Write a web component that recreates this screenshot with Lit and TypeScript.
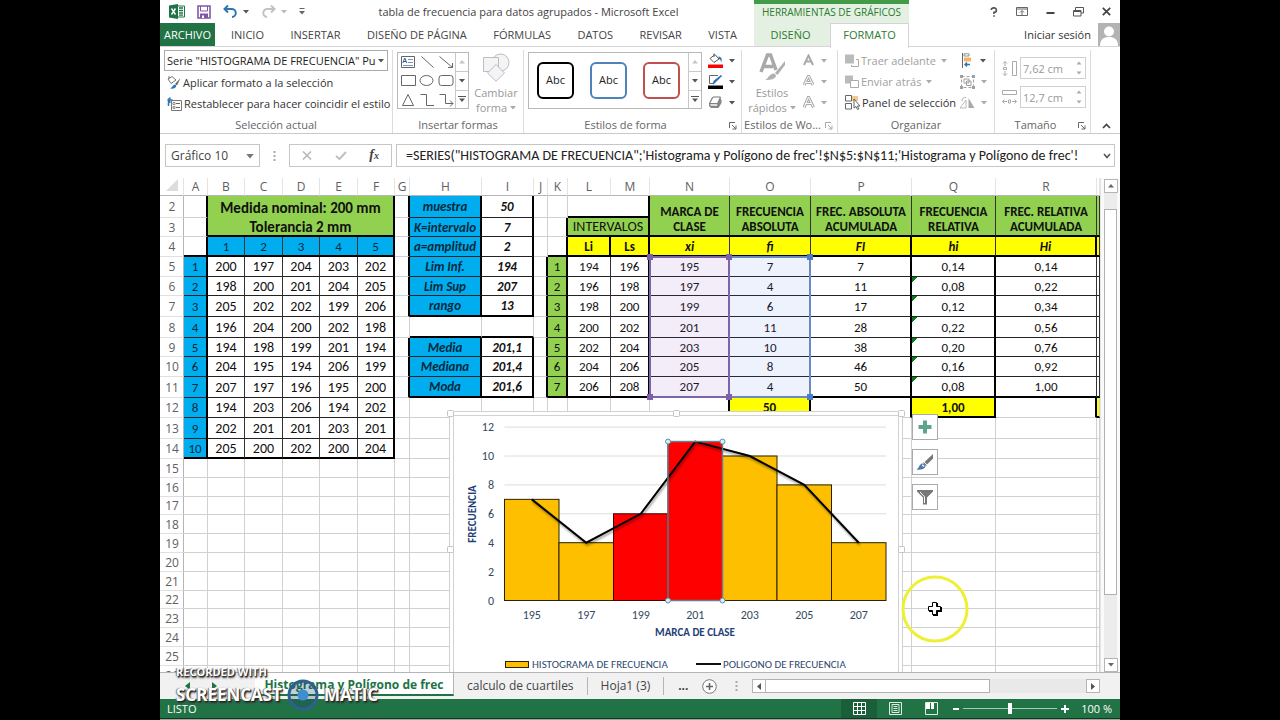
import { LitElement, html, svg, css, nothing } from "lit";
import { customElement } from "lit/decorators.js";
import { classMap } from "lit/directives/class-map.js";
import { styleMap } from "lit/directives/style-map.js";

const COLS = "ABCDEFGHIJKLMNOPQRS".split("");
const COL_WIDTHS = [24, 37, 38, 37, 38, 37, 15, 72, 52, 14, 20, 43, 39, 80, 81, 101, 84, 101, 3];
const ROW_HEAD = 24;
const COL_HEAD = 18;
const FIRST_ROW = 2;
const ROW_HEIGHTS = [22, 19, 20, 20, 19, 21, 21, 19, 20, 21, 20, 21, 20, 19, 19, 18, 19, 19, 19, 19, 18, 19, 19, 19, 19];

const colX = (col: string) => ROW_HEAD + COL_WIDTHS.slice(0, COLS.indexOf(col)).reduce((a, b) => a + b, 0);
const rowY = (row: number) => COL_HEAD + ROW_HEIGHTS.slice(0, row - FIRST_ROW).reduce((a, b) => a + b, 0);

const cells: Record<string, string> = {};
const put = (col: string, row: number, values: (string | number)[]) => {
  const start = COLS.indexOf(col);
  values.forEach((v, i) => (cells[COLS[start + i] + row] = String(v)));
};

cells.B2 = "Medida nominal: 200 mm";
cells.B3 = "Tolerancia 2 mm";
put("B", 4, [1, 2, 3, 4, 5]);
[
  [200, 197, 204, 203, 202],
  [198, 200, 201, 204, 205],
  [205, 202, 202, 199, 206],
  [196, 204, 200, 202, 198],
  [194, 198, 199, 201, 194],
  [204, 195, 194, 206, 199],
  [207, 197, 196, 195, 200],
  [194, 203, 206, 194, 202],
  [202, 201, 201, 203, 201],
  [205, 200, 202, 200, 204],
].forEach((r, i) => put("A", 5 + i, [i + 1, ...r]));
put("H", 2, ["muestra", 50]);
put("H", 3, ["K=intervalo", 7]);
put("H", 4, ["a=amplitud", 2]);
put("H", 5, ["Lim Inf.", 194]);
put("H", 6, ["Lim Sup", 207]);
put("H", 7, ["rango", 13]);
put("H", 9, ["Media", "201,1"]);
put("H", 10, ["Mediana", "201,4"]);
put("H", 11, ["Moda", "201,6"]);
cells.L3 = "INTERVALOS";
put("N", 2, ["MARCA DE CLASE", "FRECUENCIA ABSOLUTA", "FREC. ABSOLUTA ACUMULADA", "FRECUENCIA RELATIVA", "FREC. RELATIVA ACUMULADA"]);
put("L", 4, ["Li", "Ls", "xi", "fi", "FI", "hi", "Hi"]);
[
  [194, 196, 195, 7, 7, "0,14", "0,14"],
  [196, 198, 197, 4, 11, "0,08", "0,22"],
  [198, 200, 199, 6, 17, "0,12", "0,34"],
  [200, 202, 201, 11, 28, "0,22", "0,56"],
  [202, 204, 203, 10, 38, "0,20", "0,76"],
  [204, 206, 205, 8, 46, "0,16", "0,92"],
  [206, 208, 207, 4, 50, "0,08", "1,00"],
].forEach((r, i) => put("K", 5 + i, [i + 1, ...r]));
cells.O12 = "50";
cells.Q12 = "1,00";

const SPANS: Record<string, [number, number]> = {
  B2: [5, 1], B3: [5, 1], L2: [2, 1], L3: [2, 1],
  N2: [1, 2], O2: [1, 2], P2: [1, 2], Q2: [1, 2], R2: [1, 2], S2: [1, 2],
};
const covered = new Set<string>();
for (const [key, [cs, rs]] of Object.entries(SPANS)) {
  const c = COLS.indexOf(key[0]);
  const r = Number(key.slice(1));
  for (let i = 0; i < cs; i++) for (let j = 0; j < rs; j++) if (i || j) covered.add(COLS[c + i] + (r + j));
}

/** Fill, border and type classes of one cell. */
function look(c: string, r: number): Record<string, boolean> {
  const has = (s: string) => s.includes(c);
  const between = (a: number, b: number) => r >= a && r <= b;
  const k: Record<string, boolean> = {};
  const stats = between(2, 7) || between(9, 11);
  const body = between(5, 11);

  if (has("A") && between(5, 14)) k.blue = k.rm = k.bt = true;
  if (has("A") && r < 5) k.rm = true;
  if (has("BCDEF")) {
    if (r < 4) k.green = k.rm = k.title = true;
    else if (r <= 14) k.rt = k.bt = true;
    if (r === 2) k.bn = true;
    if (r === 4) k.blue = true;
    if (between(5, 14)) k.big = true;
    if (has("F") && r <= 14) k.rm = true;
  }
  if (has("ABCDEF") && (r === 4 || r === 14)) k.bm = true;
  if (has("BCDEF") && r === 3) k.bm = true;

  if (has("G") && stats) k.rm = true;
  if (has("HI") && stats) {
    k.bt = k.rm = k.bi = true;
    if (has("H")) k.blue = true;
  }
  if (has("HI") && (r === 7 || r === 8 || r === 11)) k.bm = true;

  if (has("J") && body) k.rm = true;
  if (has("K")) {
    if (r === 3 || r === 4) k.rm = true;
    if (body) k.green = k.rm = k.bt = true;
  }
  if (has("LM")) {
    if (r === 2) k.rm = k.bm = true;
    if (r === 3) k.green = k.rm = k.bm = k.big = true;
    if (r === 4) k.yellow = k.rm = k.bold = true;
    if (body) k.rt = k.bt = true;
    if (has("M") && body) k.rm = true;
  }
  if (has("NOPQRS")) {
    if (r < 4) k.green = k.rt = k.bm = k.head = true;
    if (r === 4) {
      k.yellow = k.rt = k.bi = true;
      if (has("PR")) k.rm = true;
    }
    if (body) k.rt = k.bt = true;
    if (has("PQ") && body) k.rm = true;
  }
  if (has("KLMNOPQRS") && (r === 4 || r === 11)) k.bm = true;
  if (r === 12) {
    if (has("NOPQR")) k.rm = true;
    if (has("OQS")) k.yellow = k.bm = k.bold = true;
  }
  if (has("Q") && between(6, 11)) k.flag = true;
  return k;
}

@customElement("frequency-chart")
export class FrequencyChart extends LitElement {
  static styles = css`
    :host { display: block; }
    svg { display: block; overflow: visible; font-family: Carlito, Lato, sans-serif; }
    .frame { fill: #fff; stroke: #d2d2d2; }
    .handle { fill: #fff; stroke: #c4c4c4; }
    .gridline { stroke: #dcdcdc; }
    .tick { font-size: 12px; fill: #34495e; }
    .axis { font-size: 11px; font-weight: 700; fill: #1f3f77; }
    .legend { font-size: 11px; fill: #2f4a70; }
    .bar { fill: #fdbf00; stroke: #2b2200; }
    .hot { fill: #fe0000; stroke: #400; }
    .poly { fill: none; stroke: #000; stroke-width: 2; filter: drop-shadow(1px 2px 1px rgba(0, 0, 0, 0.4)); }
    .sel { fill: none; stroke: #6a7f8c; stroke-width: 1.5; }
    .dot { fill: #d9ecf5; stroke: #5f8fa5; }
  `;

  private data = [
    { x: 195, f: 7 }, { x: 197, f: 4 }, { x: 199, f: 6, hot: true }, { x: 201, f: 11, hot: true },
    { x: 203, f: 10 }, { x: 205, f: 8 }, { x: 207, f: 4 },
  ];

  render() {
    const left = 55.5, base = 189.5, step = 54.5, unit = 14.45;
    const y = (f: number) => base - f * unit;
    const mid = (i: number) => left + step * (i + 0.5);
    const handles = [[1, 2], [227, 2], [452, 2], [1, 138], [452, 138]];
    return html`<svg width="454" height="266" role="img" aria-label="Histograma y polígono de frecuencia">
      <rect class="frame" x="0.5" y="0.5" width="453" height="290"></rect>
      <rect class="frame" x="4.5" y="4.5" width="445" height="290"></rect>
      ${handles.map(([hx, hy]) => svg`<rect class="handle" x=${hx - 2.5} y=${hy - 2.5} width="6" height="6" rx="1"></rect>`)}
      ${[0, 2, 4, 6, 8, 10, 12].map((v) => svg`
        <line class="gridline" x1=${left} x2=${left + step * 7} y1=${y(v)} y2=${y(v)}></line>
        <text class="tick" x="45" y=${y(v) + 4} text-anchor="end">${v}</text>`)}
      ${this.data.map((d, i) => svg`
        <rect class="bar ${d.hot ? "hot" : ""}" x=${left + step * i} y=${y(d.f)} width=${step} height=${d.f * unit}></rect>
        <text class="tick" x=${mid(i)} y="208" text-anchor="middle">${d.x}</text>`)}
      <polyline class="poly" points=${this.data.map((d, i) => `${mid(i)},${y(d.f)}`).join(" ")}></polyline>
      <rect class="sel" x=${left + step * 3} y=${y(11)} width=${step} height=${11 * unit}></rect>
      ${[3, 4].map((i) => [0, 11].map((v) => svg`<circle class="dot" cx=${left + step * i} cy=${y(v)} r="2.5"></circle>`))}
      <text class="axis" x="246" y="225" text-anchor="middle">MARCA DE CLASE</text>
      <text class="axis" transform="translate(27 103) rotate(-90)" text-anchor="middle">FRECUENCIA</text>
      <rect class="bar" x="56.5" y="250.5" width="23" height="6"></rect>
      <text class="legend" x="83" y="257">HISTOGRAMA DE FRECUENCIA</text>
      <line x1="247" x2="272" y1="253" y2="253" stroke="#111" stroke-width="2"></line>
      <text class="legend" x="274" y="257">POLIGONO DE FRECUENCIA</text>
    </svg>`;
  }
}

@customElement("sheet-grid")
export class SheetGrid extends LitElement {
  static styles = css`
    :host { display: block; position: relative; overflow: hidden; height: 100%; }
    table {
      border-collapse: separate; border-spacing: 0; table-layout: fixed; width: 940px;
      font: 13px/16px Carlito, Lato, sans-serif; color: #111;
    }
    th, td {
      box-sizing: border-box; padding: 1px 0 0; text-align: center; vertical-align: middle; white-space: nowrap;
      border: 0 solid #d0d0d0; border-right-width: 1px; border-bottom-width: 1px; background: #fff;
    }
    th { font: 12px/14px "Open Sans", sans-serif; color: #606060; }
    thead th { border-right-color: #e4e4e4; border-bottom-color: #b5b5b5; padding: 0; }
    tbody th { border-right-color: #b5b5b5; border-bottom-color: #e0e0e0; padding-left: 1px; }
    .blue { background: #00aeef; color: #06283b; }
    .green { background: #92d050; }
    .yellow { background: #ffff00; }
    .rt { border-right-color: #333; }
    .bt { border-bottom-color: #222; }
    .rm { border-right: 2px solid #000; }
    .bm { border-bottom: 2px solid #000; }
    .bn { border-bottom: 0; }
    .big { font-size: 14px; }
    .bold, .bi, .title, .head { font-weight: 700; }
    .bi { font-style: italic; }
    .title { font-size: 15px; }
    .head { font-size: 13px; line-height: 15px; white-space: normal; padding: 7px 2px 0; }
    .flag { background: linear-gradient(135deg, #0a7a1c 4px, #fff 4px); }
    .range { position: absolute; box-sizing: border-box; border: 2px solid; }
    .purple { background: rgba(150, 90, 200, 0.11); border-color: #7a66a8; color: #7f60aa; }
    .azure { background: rgba(90, 130, 240, 0.1); border-color: #6d89c4; color: #4d7cc9; border-left-width: 0; }
    .knob { position: absolute; width: 6px; height: 6px; background: currentColor; }
    .tl { left: -4px; top: -4px; }
    .tr { right: -4px; top: -4px; }
    .bl { left: -4px; bottom: -4px; }
    .br { right: -4px; bottom: -4px; }
    frequency-chart { position: absolute; left: 289px; top: 233px; }
    .tools { position: absolute; left: 752px; top: 236px; display: grid; gap: 9px; }
    .tools button {
      width: 26px; height: 26px; padding: 0; display: grid; place-items: center;
      background: #fff; border: 1px solid #ababab;
    }
  `;

  private range(col: string, tone: string) {
    const x = colX(col), w = COL_WIDTHS[COLS.indexOf(col)];
    const box = { left: `${x - 1}px`, top: `${rowY(5) - 1}px`, width: `${w + 1}px`, height: `${rowY(12) - rowY(5) + 1}px` };
    return html`<div class="range ${tone}" style=${styleMap(box)}>
      ${(tone === "purple" ? ["tl", "tr", "bl", "br"] : ["tr", "br"]).map((p) => html`<span class="knob ${p}"></span>`)}
    </div>`;
  }

  render() {
    return html`
      <table>
        <colgroup>
          <col style=${styleMap({ width: `${ROW_HEAD}px` })} />
          ${COL_WIDTHS.map((w) => html`<col style=${styleMap({ width: `${w}px` })} />`)}
        </colgroup>
        <thead>
          <tr style=${styleMap({ height: `${COL_HEAD}px` })}>
            <th><svg width="12" height="12" viewBox="0 0 12 12" aria-hidden="true"><path d="M12 0V12H0Z" fill="#dcdcdc"/></svg></th>
            ${COLS.map((c) => html`<th scope="col">${c === "S" ? nothing : c}</th>`)}
          </tr>
        </thead>
        <tbody>
          ${ROW_HEIGHTS.map((h, i) => {
            const r = i + FIRST_ROW;
            return html`<tr style=${styleMap({ height: `${h}px` })}>
              <th scope="row">${r}</th>
              ${COLS.filter((c) => !covered.has(c + r)).map((c) => {
                const [cs, rs] = SPANS[c + r] ?? [1, 1];
                return html`<td class=${classMap(look(c, r))} colspan=${cs} rowspan=${rs}>${cells[c + r] ?? nothing}</td>`;
              })}
            </tr>`;
          })}
        </tbody>
      </table>
      ${this.range("O", "azure")}
      ${this.range("N", "purple")}
      <frequency-chart></frequency-chart>
      <div class="tools">
        <button aria-label="Elementos de gráfico"><svg width="14" height="14" viewBox="0 0 14 14"><path d="M5 0.500H9V5H13.500V9H9V13.500H5V9H0.500V5H5Z" fill="#5fa58c"/></svg></button>
        <button aria-label="Estilos de gráfico"><svg width="18" height="18" viewBox="0 0 18 18"><path d="M17 1V5.500L11 11.500 8.500 9Z" fill="#777"/><path d="M7.500 9.500 10.500 12.500" stroke="#777" stroke-width="1"/><path d="M0.500 16.500C3 15.500 3 11.500 6 10.500 9 10 10.500 12.500 9 14.500 7 16.500 4 17 0.500 16.500Z" fill="#4e78a8"/><path d="M6.200 11.800 8 13.500" stroke="#fff" stroke-width="1.400"/></svg></button>
        <button aria-label="Filtros de gráfico"><svg width="18" height="18" viewBox="0 0 18 18"><path d="M1 2H17V3.500L11 9.500V16.500H7V9.500L1 3.500Z" fill="#777"/><path d="M4 4 8.500 8.800V15" stroke="#fff" fill="none"/></svg></button>
      </div>
    `;
  }
}

const down = (fill = "#555") => svg`<path d="M0 0H6L3 3.500Z" fill=${fill}></path>`;
const caret = (fill = "#555") => html`<svg class="caret" width="6" height="4" viewBox="0 0 6 4" aria-hidden="true">${down(fill)}</svg>`;
const launcher = (color = "#666") => html`<button class="launch" aria-label="Más opciones"><svg width="8" height="8" viewBox="0 0 8 8"><path d="M0.500 6V0.500H6M3 3 7 7M7 3.500V7H3.500" fill="none" stroke=${color}></path></svg></button>`;
const spinner = html`<svg class="spin" width="6" height="14" viewBox="0 0 6 14" aria-hidden="true"><path d="M0.500 3.500H5.500L3 0.500ZM0.500 10.500H5.500L3 13.500Z" fill="#aaa"/></svg>`;
const galleryArrows = html`<div class="arrows">
  <button aria-label="Anterior"><svg width="6" height="4"><path d="M0 3.500H6L3 0Z" fill="#c4c4c4"/></svg></button>
  <button aria-label="Siguiente">${caret()}</button>
  <button aria-label="Más"><svg width="8" height="6"><path d="M0 0.500H8" stroke="#555"/><path d="M1 2.500H7L4 6Z" fill="#555"/></svg></button>
</div>`;

@customElement("app-root")
export class AppRoot extends LitElement {
  static styles = css`
    :host {
      display: flex; justify-content: center; height: 100vh; background: #000; overflow: hidden;
      font: 12px/16px "Open Sans", "Noto Sans", sans-serif; color: #444;
    }
    * { box-sizing: border-box; }
    button, input, select { font: inherit; color: inherit; margin: 0; border-radius: 0; }
    button { background: none; border: 0; padding: 0; }
    svg { display: block; flex: none; }
    .window {
      position: relative; height: 100%; aspect-ratio: 4 / 3; max-width: 100%; background: #fff;
      display: flex; flex-direction: column; overflow: hidden; white-space: nowrap;
    }

    .top { display: flex; height: 47px; flex: none; border-bottom: 1px solid #d4d4d4; }
    .main { width: 594px; display: flex; flex-direction: column; }
    .titlebar { display: flex; align-items: center; height: 23px; padding-left: 9px; }
    .quick { display: flex; align-items: center; gap: 12px; width: 144px; }
    .quick .pair { display: flex; align-items: center; gap: 5px; }
    .title { flex: 1; text-align: center; padding: 0 10px 0 0; font-size: 11px; }
    .tabs { flex: 1; display: flex; font-size: 11px; }
    .file { width: 55px; background: #217346; color: #fff; }
    .tablist { flex: 1; display: flex; justify-content: space-between; padding: 0 17px 0 16px; }
    .context { width: 155px; background: #e4f1e2; border-top: 4px solid #439a47; color: #2b7a2f; display: grid; grid-template-rows: 19px 24px; grid-template-columns: 76px 1fr; font-size: 11px; }
    .context .name { grid-column: 1 / 3; text-align: center; font-size: 10px; line-height: 17px; }
    .context .off { padding-right: 3px; }
    .context .on { background: #fff; border: 1px solid #d4d4d4; border-bottom: 0; height: 25px; padding-bottom: 3px; }
    .account { flex: 1; display: flex; flex-direction: column; }
    .controls { display: flex; height: 23px; align-items: center; justify-content: flex-end; gap: 18px; padding-right: 9px; }
    .signin { display: flex; flex: 1; align-items: center; justify-content: flex-end; gap: 7px; font-size: 11px; color: #333; }

    .ribbon { display: flex; height: 87px; flex: none; border-bottom: 1px solid #c9c9c9; font-size: 11px; }
    .group { display: flex; flex-direction: column; border-right: 1px solid #dcdcdc; height: 83px; margin-top: 3px; }
    .body { flex: 1; min-height: 0; }
    .foot { position: relative; height: 16px; flex: none; text-align: center; color: #666; }
    .foot:has(.launch) { padding-right: 14px; }
    .launch { position: absolute; right: 4px; top: 5px; }
    .g1 { width: 233px; }
    .g2 { width: 131px; }
    .g3 { width: 218px; }
    .g4 { width: 96px; }
    .g5 { width: 157px; }
    .g6 { width: 96px; }
    .g7 { flex: 1; border: 0; }
    .pick { position: relative; display: block; margin: 0 4px 1px; }
    .pick select { width: 100%; height: 21px; padding: 0 0 0 2px; appearance: none; background: #fff; border: 1px solid #ababab; color: #222; }
    .pick .caret { position: absolute; right: 4px; top: 9px; }
    .cmd { display: flex; align-items: center; gap: 2px; height: 21px; padding-left: 7px; color: #333; }
    .cmd.dim { color: #a0a0a0; }
    .row { display: flex; }
    .gallery { display: flex; height: 57px; margin-top: 2px; border: 1px solid #b8b8b8; }
    .arrows { display: grid; grid-template-rows: repeat(3, 1fr); width: 13px; border-left: 1px solid #c8c8c8; }
    .arrows button { display: grid; place-items: center; }
    .arrows button + button { border-top: 1px solid #c8c8c8; }
    .shapes { margin-left: 4px; width: 72px; justify-content: space-between; }
    .bigbtn { display: flex; flex-direction: column; align-items: center; line-height: 15px; color: #999; padding-top: 3px; }
    .bigbtn span { display: flex; align-items: center; gap: 3px; }
    .bigbtn svg.pic { margin-bottom: 3px; }
    .change { width: 58px; }
    .styles { margin-left: 4px; width: 174px; }
    .samples { flex: 1; display: flex; justify-content: space-around; align-items: center; }
    .sample { width: 37px; height: 37px; border: 2px solid #000; border-radius: 6px; color: #222; padding-bottom: 2px; }
    .sample.b { border-color: #4f81bd; }
    .sample.r { border-color: #c0504d; }
    .stack { display: flex; flex-direction: column; padding-left: 6px; }
    .stack.tight { padding-left: 1px; }
    .stack button { display: flex; align-items: center; gap: 6px; height: 21px; }
    .quickst { width: 60px; }
    .arrange { width: 116px; }
    .size { display: grid; align-content: start; gap: 7px; padding: 7px 4px 0 7px; }
    .size label { display: flex; align-items: center; gap: 3px; position: relative; }
    .size input { width: 66px; height: 22px; border: 1px solid #d0d0d0; color: #9a9a9a; padding: 0 0 0 2px; background: #fff; }
    .spin { position: absolute; right: 4px; top: 4px; }
    .fold { position: absolute; right: 9px; top: 6px; }

    .formula { display: flex; height: 44px; flex: none; padding: 10px 5px 11px 5px; gap: 4px; background: #fff; color: #222; }
    .formula > * { border: 1px solid #c6c6c6; }
    .namebox { position: relative; width: 95px; }
    .namebox input { width: 78px; height: 21px; border: 0; padding: 0 0 0 5px; color: #444; background: none; }
    .namebox .caret { position: absolute; right: 5px; top: 9px; }
    .formula .grip { border: 0; width: 21px; display: grid; place-items: center; }
    .fx { width: 103px; display: flex; align-items: center; justify-content: space-between; padding: 0 12px; }
    .fx i { font: italic 700 14px/16px "Liberation Serif", serif; color: #444; }
    .fx i small { font-size: 10px; }
    .bar { flex: 1; display: flex; align-items: center; padding-right: 3px; }
    .bar input { flex: 1; min-width: 0; border: 0; padding: 0 0 0 9px; background: none; color: #222; font: 14px/18px Carlito, Lato, sans-serif; }

    .sheet { flex: 1; display: flex; min-height: 0; background: #fafafa; }
    sheet-grid { flex: 1; min-width: 0; }
    .vscroll { width: 20px; padding: 1px 3px 0; display: flex; flex-direction: column; background: #fafafa; border-left: 1px solid #e4e4e4; }
    .sb { width: 14px; height: 14px; border: 1px solid #b5b5b5; background: #fff; display: grid; place-items: center; flex: none; }
    .vtrack { flex: 1; background: #ececec; padding-top: 16px; }
    .vthumb { height: 86%; background: #fff; border: 1px solid #b0b0b0; }

    .sheets { display: flex; align-items: stretch; height: 27px; flex: none; background: #f1f1f1; border-top: 1px solid #b5b5b5; }
    .nav { display: flex; align-items: center; gap: 22px; width: 95px; padding-left: 25px; }
    .sheets .tab { padding: 0 13px; margin: 4px 0; border-right: 1px solid #b5b5b5; }
    .sheets .tab.active { width: 199px; margin: 0 0 3px; padding: 2px 0 0; background: #fff; color: #217346; font: 700 12px/16px "Open Sans", sans-serif; border-bottom: 2px solid #217346; border-right: 1px solid #b5b5b5; }
    .more { width: 38px; font-weight: 700; }
    .hscroll { display: flex; align-items: center; flex: 1; margin: 0 20px 0 14px; }
    .htrack { flex: 1; height: 14px; background: #e9e9e9; }
    .hthumb { width: 70%; height: 14px; background: #fff; border: 1px solid #b0b0b0; border-left: 0; }
    .status { display: flex; align-items: center; height: 19px; flex: none; background: #217346; color: #fff; padding: 0 8px 0 7px; font-size: 11px; }
    .views { display: flex; margin-left: auto; }
    .views button { width: 36px; height: 19px; display: grid; place-items: center; }
    .views .on { background: #1a5f39; }
    .zoom { display: flex; align-items: center; gap: 4px; margin-left: 4px; }
    .zoom input { appearance: none; width: 94px; height: 14px; background: linear-gradient(#a8c9b6, #a8c9b6) center / 100% 1px no-repeat; }
    .zoom input::-webkit-slider-thumb { appearance: none; width: 4px; height: 11px; background: #fff; }
    .zoom output { margin-left: 8px; }
    .edge { height: 2px; flex: none; background: #9aa5a0; border-top: 1px solid #12351f; }

    .pointer { position: absolute; left: 741px; top: 575px; }
    .mark { position: absolute; left: 16px; top: 665px; color: #fff; font: 700 11px/14px "Open Sans", sans-serif; text-shadow: 1px 1px 1px #222, -1px 0 1px #777, 1px 2px 2px #333; }
    .mark .big { display: flex; align-items: center; gap: 5px; font-size: 17px; line-height: 28px; }
  `;

  private tabs = ["INICIO", "INSERTAR", "DISEÑO DE PÁGINA", "FÓRMULAS", "DATOS", "REVISAR", "VISTA"];

  private renderTop() {
    return html`<header class="top">
      <div class="main">
        <div class="titlebar">
          <div class="quick">
            <svg width="16" height="15" viewBox="0 0 16 15"><path d="M8 2H15.500V13H8" fill="#fff" stroke="#217346"/><path d="M10 4H14M10 6.500H14M10 9H14M10 11.200H14" stroke="#217346" stroke-width="1.300"/><path d="M0 1.500 9 0V15L0 13.500Z" fill="#217346"/><path d="M2.500 4.500 6.500 10.500M6.500 4.500 2.500 10.500" stroke="#fff" stroke-width="1.400"/></svg>
            <button aria-label="Guardar"><svg width="14" height="14" viewBox="0 0 14 14"><path d="M1 1H13V13H1Z" fill="#fff" stroke="#7e57a8" stroke-width="1.600"/><path d="M3.500 1V6H10.500V1" fill="none" stroke="#7e57a8"/><path d="M3 8.500H11V13H3Z" fill="#7e57a8"/><path d="M5 10.500H7V13H5Z" fill="#fff"/></svg></button>
            <button class="pair" aria-label="Deshacer"><svg width="15" height="13" viewBox="0 0 15 13"><path d="M1.500 4H8.500A4 4 0 0 1 9 12M5 0.500 1.500 4 5 7.500" fill="none" stroke="#2f75b5" stroke-width="2"/></svg>${caret()}</button>
            <button class="pair" aria-label="Rehacer"><svg width="15" height="13" viewBox="0 0 15 13"><path d="M13.500 4H6.500A4 4 0 0 0 6 12M10 0.500 13.500 4 10 7.500" fill="none" stroke="#c2c2c2" stroke-width="2"/></svg>${caret("#bbb")}</button>
            <svg width="6" height="7" viewBox="0 0 6 7"><path d="M0.500 0.500H5.500" stroke="#666"/><path d="M0 3H6L3 6.500Z" fill="#666"/></svg>
          </div>
          <div class="title">tabla de frecuencia para datos agrupados - Microsoft Excel</div>
        </div>
        <nav class="tabs">
          <button class="file">ARCHIVO</button>
          <div class="tablist">${this.tabs.map((t) => html`<button>${t}</button>`)}</div>
        </nav>
      </div>
      <div class="context">
        <div class="name">HERRAMIENTAS DE GRÁFICOS</div>
        <button class="off">DISEÑO</button>
        <button class="on">FORMATO</button>
      </div>
      <div class="account">
        <div class="controls">
          <svg width="8" height="10" viewBox="0 0 8 10"><path d="M1.200 3A2.600 2.300 0 1 1 4 5.400V7M4 8.200V9.800" fill="none" stroke="#555" stroke-width="1.700"/></svg>
          <svg width="12" height="9" viewBox="0 0 12 9"><path d="M0.500 0.500H11.500V8.500H0.500Z M0.500 2H11.500" fill="none" stroke="#666"/><path d="M6 8V4M4 5.500 6 3.500 8 5.500" fill="none" stroke="#666"/></svg>
          <svg width="9" height="9" viewBox="0 0 9 9"><path d="M0.500 6H8.500" stroke="#444" stroke-width="2"/></svg>
          <svg width="11" height="10" viewBox="0 0 11 10"><path d="M2.500 3V0.500H10.500V6H8M0.500 3.500H8V9H0.500Z M0.500 4.500H8" fill="none" stroke="#555"/></svg>
          <svg width="9" height="9" viewBox="0 0 9 9"><path d="M0.800 0.800 8.200 8.200M8.200 0.800 0.800 8.200" stroke="#444" stroke-width="1.700"/></svg>
        </div>
        <div class="signin"><span>Iniciar sesión</span>
          <svg width="22" height="23" viewBox="0 0 22 23"><path d="M0 0H22V23H0Z" fill="#b3b3b3"/><circle cx="11" cy="8.500" r="5" fill="#fff"/><path d="M2 23C2 16 6 14 11 14S20 16 20 23Z" fill="#fff"/></svg>
        </div>
      </div>
    </header>`;
  }

  private renderRibbon() {
    return html`<section class="ribbon">
      <div class="group g1">
        <div class="body">
          <label class="pick"><select aria-label="Elementos de gráfico"><option>Serie "HISTOGRAMA DE FRECUENCIA" Pu</option></select>${caret()}</label>
          <button class="cmd"><svg width="14" height="15" viewBox="0 0 14 15"><path d="M1 4 5 1.500 9 5 4 8.500Z" fill="#fff" stroke="#777"/><path d="M2 1V4" stroke="#777"/><path d="M13.500 3 8 9 10 10.500Z" fill="#666"/><path d="M3 13.500C5 13 5.500 10 8 9.500 10.500 10.500 9 14.500 3 13.500Z" fill="#2f75b5"/></svg>Aplicar formato a la selección</button>
          <button class="cmd"><svg width="15" height="14" viewBox="0 0 15 14"><path d="M4.500 3.500H14.500V13.500H4.500Z" fill="#fff" stroke="#777"/><path d="M9 6.500H13M9 10.500H13" stroke="#666"/><path d="M6 5.500H8V7.500H6ZM6 9.500H8V11.500H6Z" fill="none" stroke="#777" stroke-width="0.800"/><path d="M1 3H5.500M3.500 0.500 1 3 3.500 5.500M1.500 3V9" fill="none" stroke="#2f75b5" stroke-width="1.500"/></svg>Restablecer para hacer coincidir el estilo</button>
        </div>
        <div class="foot">Selección actual</div>
      </div>
      <div class="group g2">
        <div class="body row">
          <div class="gallery shapes">
            <svg width="57" height="55" viewBox="0 0 57 55" fill="none" stroke="#666"><path d="M3.500 3.500H16.500V14.500H3.500Z"/><path d="M10 6.500H15M10 9.500H15M5 12.500H15" stroke="#7d94b8"/><path d="M4.800 10 6.800 5 8.800 10M5.500 8.500H8" stroke="#2f5f9f"/><path d="M23.500 3.500 35.500 14.500M41.500 3.500 54.500 14.500M54.500 10V14.500H50"/><path d="M3.500 22.500H17.500V32.500H3.500Z"/><ellipse cx="28.500" cy="27.500" rx="6.500" ry="5"/><rect x="41" y="22.500" width="14" height="10" rx="2.500"/><path d="M4.500 52.500 10 41.500 15.500 52.500ZM22.500 41.500H28.500V52.500H36M41.500 41.500H47.500V50.500H55M52 47.500 55 50.500 52 53.500"/></svg>
            ${galleryArrows}
          </div>
          <button class="bigbtn change"><svg class="pic" width="28" height="29" viewBox="0 0 28 29" fill="#f4f4f7" stroke="#bcbcbc"><circle cx="18.500" cy="9.500" r="8.500"/><path d="M1.500 4.500H16.500V18.500H1.500Z"/><path d="M14 11.500 22.500 20 14 28.300 5.500 20Z"/></svg><span>Cambiar</span><span>forma ${caret("#aaa")}</span></button>
        </div>
        <div class="foot">Insertar formas</div>
      </div>
      <div class="group g3">
        <div class="body row">
          <div class="gallery styles">
            <div class="samples"><button class="sample">Abc</button><button class="sample b">Abc</button><button class="sample r">Abc</button></div>
            ${galleryArrows}
          </div>
          <div class="stack">
            <button aria-label="Relleno de forma"><svg width="15" height="15" viewBox="0 0 15 15"><path d="M2 5.500 7 1.500 11 6 6 9.500Z" fill="#fff" stroke="#555"/><path d="M6 0.500V4" stroke="#555"/><path d="M10.500 3.500C14 4 14.500 7 13 9.500 13 7 12 6 10.500 6Z" fill="#2f75b5"/><path d="M0 11.500H15V15H0Z" fill="#f00"/></svg>${caret()}</button>
            <button aria-label="Contorno de forma"><svg width="15" height="15" viewBox="0 0 15 15"><path d="M10 1.500H1.500V9.500H5" fill="none" stroke="#666"/><path d="M13.500 1.500 6 9 5 10 6.500 7Z" fill="#2f75b5" stroke="#2f75b5" stroke-width="1.500"/><path d="M0 11.500H15V15H0Z" fill="#000"/></svg>${caret()}</button>
            <button aria-label="Efectos de forma"><svg width="15" height="13" viewBox="0 0 15 13"><path d="M4 1.500H12L13.500 4V7L10.500 12H3L1 10V7.500Z" fill="#888"/><path d="M5 1H12.500L9.500 7.500H1.500Z" fill="#fff" stroke="#777"/><path d="M1.500 7.500H9.500L10 10.500H2.500Z" fill="#ddd" stroke="#777" stroke-width="0.800"/></svg>${caret()}</button>
          </div>
        </div>
        <div class="foot">Estilos de forma ${launcher()}</div>
      </div>
      <div class="group g4">
        <div class="body row">
          <button class="bigbtn quickst"><svg class="pic" width="27" height="29" viewBox="0 0 27 29"><path d="M2 19 8.500 2H11.500L17 17M5 13.500H14" fill="none" stroke="#a9a9a9" stroke-width="3.500"/><path d="M26 8 16 20 18.500 22 26 12Z" fill="#b0b0b0"/><path d="M6 27C9 26.500 10 20.500 15 20.500 19 22 17.500 27.500 6 27Z" fill="#b0b0b0"/></svg><span>Estilos</span><span>rápidos ${caret("#aaa")}</span></button>
          <div class="stack tight">
            ${["M1 11 5.500 1.500 10 11M2.800 7.500H8.200", "M1 10 5.500 1 10 10M2.500 7.500H8.500", "M1 11.500 5.500 1 10.500 11.500M2.500 7.500H9"].map((d, i) => html`<button aria-label="Texto"><svg width="12" height="13" viewBox="0 0 12 13"><path d=${d} fill="none" stroke="#aaa" stroke-width=${i ? 3 : 2}></path>${i ? svg`<path d=${d} fill="none" stroke="#fff" stroke-width="1"></path>` : nothing}</svg>${caret("#aaa")}</button>`)}
          </div>
        </div>
        <div class="foot">Estilos de Wo... ${launcher("#aaa")}</div>
      </div>
      <div class="group g5">
        <div class="body row">
          <div class="arrange">
            <button class="cmd dim"><svg width="14" height="14" viewBox="0 0 14 14"><path d="M0 0.500H9V9.500H0Z" fill="#bbb"/><path d="M11 5.500H13.500V12.500H6.500V11" fill="none" stroke="#aaa"/></svg>Traer adelante&nbsp; ${caret("#aaa")}</button>
            <button class="cmd dim"><svg width="14" height="14" viewBox="0 0 14 14"><path d="M0 0.500H8V8.500H0Z" fill="#bbb"/><path d="M5.500 5.500H13.500V12.500H5.500Z" fill="#fff" stroke="#aaa"/></svg>Enviar atrás&nbsp; ${caret("#aaa")}</button>
            <button class="cmd"><svg width="15" height="15" viewBox="0 0 15 15"><path d="M0.500 0.500H6.500V6H0.500ZM0.500 8.500H6.500V14H0.500Z" fill="#fff" stroke="#666"/><path d="M7 1H13V6H7Z" fill="#f3c98b"/><path d="M9 4V13L11 11.500 12.500 14.500 13.800 14 12.500 11H15Z" fill="#fff" stroke="#555" stroke-width="0.900"/></svg>Panel de selección</button>
          </div>
          <div class="stack">
            <button aria-label="Alinear"><svg width="14" height="15" viewBox="0 0 14 15"><path d="M2.500 0V15" stroke="#666"/><path d="M4 0.800H9V3H4Z" fill="#fff" stroke="#777" stroke-width="0.800"/><path d="M4 4.500H11V8.500H4Z" fill="#f0b566"/><path d="M10 11.500H5M7 9.500 5 11.500 7 13.500" fill="none" stroke="#2f75b5" stroke-width="1.400"/></svg>${caret()}</button>
            <button aria-label="Agrupar"><svg width="15" height="14" viewBox="0 0 15 14" fill="none" stroke="#a0a0a0"><path d="M1.500 1.500H13.500V12.500H1.500Z" stroke-dasharray="3 2"/><path d="M4 4H9V8H4ZM6.500 6H11V10.500H6.500Z"/><path d="M0 0H3V3H0ZM12 0H15V3H12ZM0 11H3V14H0ZM12 11H15V14H12Z" fill="#a0a0a0" stroke="none"/></svg>${caret("#aaa")}</button>
            <button aria-label="Girar"><svg width="15" height="13" viewBox="0 0 15 13"><path d="M0 12H6V4Z" fill="#fff" stroke="#aaa" stroke-width="0.800"/><path d="M8.500 2V12H14.500Z" fill="#aaa"/><path d="M2 5C2 2 4 1.500 6 1.500" fill="none" stroke="#aaa"/></svg>${caret("#aaa")}</button>
          </div>
        </div>
        <div class="foot">Organizar</div>
      </div>
      <div class="group g6">
        <div class="body size">
          <label><svg width="15" height="15" viewBox="0 0 15 15" fill="none" stroke="#aaa"><path d="M10.500 0.500H14.500V14.500H10.500Z"/><path d="M3 0.500V5M1 2.500 3 0.500 5 2.500M3 14.500V10M1 12.500 3 14.500 5 12.500M1.500 6.500H4.500V8.500H1.500Z"/></svg><input aria-label="Alto" value="7,62 cm" />${spinner}</label>
          <label><svg width="15" height="15" viewBox="0 0 15 15" fill="none" stroke="#aaa"><path d="M0.500 0.500H14.500V4.500H0.500Z"/><path d="M0.500 11.500H5M2.500 9.500 0.500 11.500 2.500 13.500M14.500 11.500H10M12.500 9.500 14.500 11.500 12.500 13.500M6.500 10H8.500V13H6.500Z"/></svg><input aria-label="Ancho" value="12,7 cm" />${spinner}</label>
        </div>
        <div class="foot">Tamaño ${launcher()}</div>
      </div>
      <div class="group g7">
        <div class="body"></div>
        <div class="foot"><button class="fold" aria-label="Contraer"><svg width="9" height="6" viewBox="0 0 9 6"><path d="M1 5 4.500 1.500 8 5" fill="none" stroke="#444" stroke-width="1.700"/></svg></button></div>
      </div>
    </section>`;
  }

  render() {
    return html`<div class="window">
      ${this.renderTop()}
      ${this.renderRibbon()}
      <div class="formula">
        <div class="namebox"><input aria-label="Cuadro de nombres" value="Gráfico 10" /><svg class="caret" width="8" height="5" viewBox="0 0 6 4">${down("#777")}</svg></div>
        <div class="grip"><svg width="3" height="10" viewBox="0 0 3 10"><path d="M1.500 0V2M1.500 4V6M1.500 8V10" stroke="#aaa" stroke-width="2"/></svg></div>
        <div class="fx">
          <svg width="10" height="9" viewBox="0 0 10 9"><path d="M1 0.500 9 8.500M9 0.500 1 8.500" stroke="#b5b5b5" stroke-width="1.500"/></svg>
          <svg width="12" height="9" viewBox="0 0 12 9"><path d="M1 5 4.500 8 11 1" fill="none" stroke="#c0c0c0" stroke-width="2"/></svg>
          <i>f<small>x</small></i>
        </div>
        <div class="bar">
          <input aria-label="Barra de fórmulas" value=${`=SERIES("HISTOGRAMA DE FRECUENCIA";'Histograma y Polígono de frec'!$N$5:$N$11;'Histograma y Polígono de frec'!`} />
          <svg width="8" height="6" viewBox="0 0 8 6"><path d="M1 1 4 4.500 7 1" fill="none" stroke="#555" stroke-width="1.600"/></svg>
        </div>
      </div>
      <main class="sheet">
        <sheet-grid></sheet-grid>
        <div class="vscroll">
          <button class="sb" aria-label="Subir"><svg width="6" height="4"><path d="M0 3.500H6L3 0Z" fill="#666"/></svg></button>
          <div class="vtrack"><div class="vthumb"></div></div>
          <button class="sb" aria-label="Bajar">${caret("#666")}</button>
        </div>
      </main>
      <div class="sheets">
        <div class="nav"><svg width="5" height="8" viewBox="0 0 5 8"><path d="M5 0V8L0 4Z" fill="#217346"/></svg><svg width="5" height="8" viewBox="0 0 5 8"><path d="M0 0V8L5 4Z" fill="#217346"/></svg></div>
        <button class="tab active">Histograma y Polígono de frec</button>
        <button class="tab">calculo de cuartiles</button>
        <button class="tab">Hoja1 (3)</button>
        <button class="more">...</button>
        <button aria-label="Hoja nueva"><svg width="15" height="15" viewBox="0 0 15 15"><circle cx="7.500" cy="7.500" r="6.800" fill="#fff" stroke="#777"/><path d="M7.500 4V11M4 7.500H11" stroke="#666" stroke-width="1.600"/></svg></button>
        <div class="hscroll">
          <svg width="21" height="10" viewBox="0 0 21 10"><path d="M5.500 0V2M5.500 4V6M5.500 8V10" stroke="#aaa" stroke-width="2"/></svg>
          <button class="sb" aria-label="Izquierda"><svg width="4" height="7" viewBox="0 0 4 7"><path d="M4 0V7L0 3.500Z" fill="#555"/></svg></button>
          <div class="htrack"><div class="hthumb"></div></div>
          <button class="sb" aria-label="Derecha"><svg width="4" height="7" viewBox="0 0 4 7"><path d="M0 0V7L4 3.500Z" fill="#555"/></svg></button>
        </div>
      </div>
      <footer class="status">
        <span>LISTO</span>
        <div class="views">
          <button class="on" aria-label="Normal"><svg width="13" height="13" viewBox="0 0 13 13" fill="none" stroke="#fff"><path d="M0.500 0.500H12.500V12.500H0.500ZM4.500 0.500V12.500M8.500 0.500V12.500M0.500 4.500H12.500M0.500 8.500H12.500"/></svg></button>
          <button aria-label="Diseño de página"><svg width="13" height="13" viewBox="0 0 13 13" fill="none" stroke="#dfeee5"><path d="M0.500 0.500H12.500V12.500H0.500ZM3 2.500H10V10.500H3ZM4.500 4.500H8.500M4.500 6.500H8.500M4.500 8.500H8.500"/></svg></button>
          <button aria-label="Salto de página"><svg width="13" height="13" viewBox="0 0 13 13"><path d="M0.500 0.500H12.500V12.500H0.500Z" fill="none" stroke="#dfeee5"/><path d="M1 1H5V7H1ZM6 1H9V7H6Z" fill="#fff"/></svg></button>
        </div>
        <div class="zoom">
          <svg width="6" height="2"><path d="M0 1H6" stroke="#fff" stroke-width="2"/></svg>
          <input type="range" aria-label="Zoom" min="10" max="190" value="100" />
          <svg width="8" height="8"><path d="M0 4H8M4 0V8" stroke="#fff" stroke-width="2"/></svg>
          <output>100 %</output>
        </div>
      </footer>
      <div class="edge"></div>
      <svg class="pointer" width="68" height="68" viewBox="0 0 68 68" aria-hidden="true">
        <circle cx="34" cy="34" r="32" fill="none" stroke="#eef035" stroke-width="3"/>
        <path d="M32 28H37V32H41V37H37V41H32V37H28V32H32Z" fill="#000"/>
        <path d="M31.500 27.500H35.500V31.500H39.500V35.500H35.500V39.500H31.500V35.500H27.500V31.500H31.500Z" fill="#fff" stroke="#000"/>
      </svg>
      <div class="mark">
        <div>RECORDED WITH</div>
        <div class="big">SCREENCAST<svg width="32" height="32" viewBox="0 0 32 32"><circle cx="16" cy="16" r="14" fill="rgba(20,60,110,.25)" stroke="#2f618f" stroke-width="3"/><circle cx="16" cy="16" r="5.500" fill="#3f8fd0"/></svg>MATIC</div>
      </div>
    </div>`;
  }
}
